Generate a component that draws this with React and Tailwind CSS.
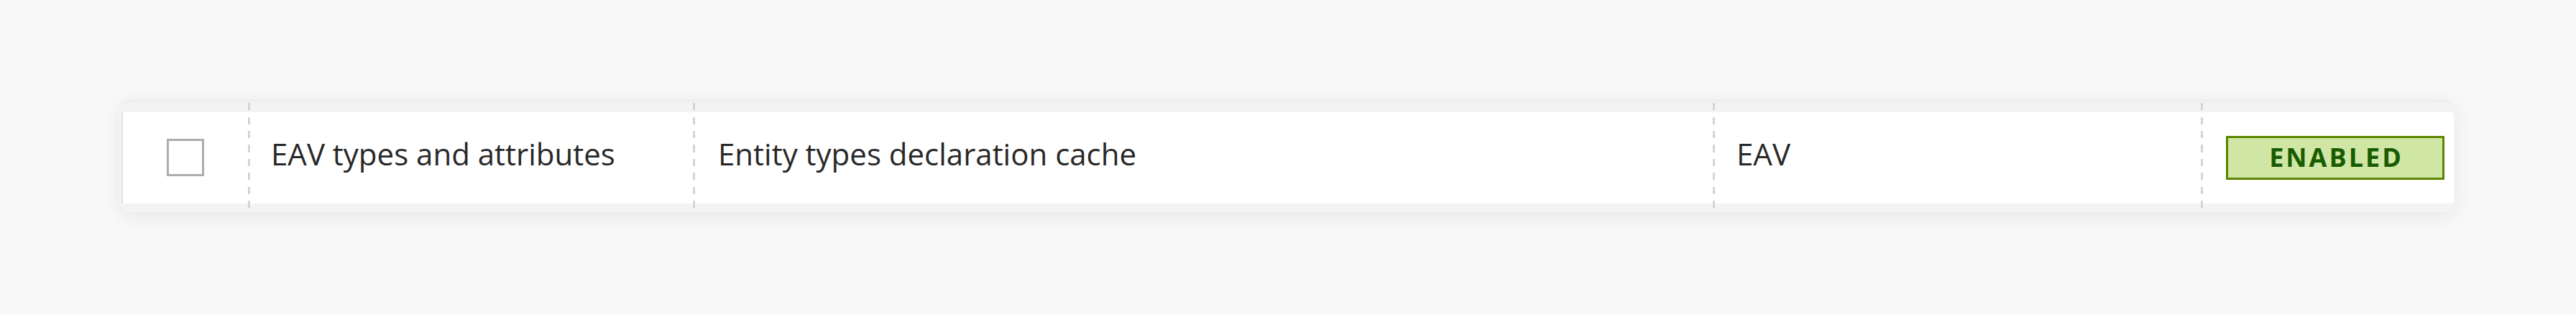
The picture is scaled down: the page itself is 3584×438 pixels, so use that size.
export default function App() {
  const font = { fontFamily: '"Open Sans", "Noto Sans", sans-serif' };
  const dash =
    "bg-[repeating-linear-gradient(to_bottom,#d4d4d4_0px,#d4d4d4_10px,transparent_10px,transparent_19.5px)] bg-[length:3px_100%] bg-no-repeat bg-left";
  return (
    <div className="min-h-[438px] w-[3584px] bg-[#f8f8f8] pt-[138px] pl-[165px]" style={font}>
      <div className="w-[3252px] h-[157px] rounded-[18px] bg-[#f3f3f3] border-t-[4px] border-[#efefef] shadow-[0_6px_24px_rgba(0,0,0,0.07)] pt-[1px] pl-[6px] pr-[3px]">
        <div className="grid grid-cols-[174px_619px_1419px_679px_352px] grid-rows-[152px] h-[152px]">
          <div className="row-start-1 col-start-1 col-end-6 mt-[13px] mb-[12px] bg-white rounded-r-[4px] shadow-[-2px_0_0_#e2e2e2]" />
          <div className="row-start-1 col-start-1 flex items-center justify-center">
            <div className="w-[52px] h-[52px] border-[3px] border-[#adadad] bg-white" />
          </div>
          <div className={`row-start-1 col-start-2 flex items-center ${dash} pl-[32px] pb-[12px]`}>
            <span className="text-[42px] leading-[57px] text-[#282828] whitespace-nowrap">EAV types and attributes</span>
          </div>
          <div className={`row-start-1 col-start-3 flex items-center ${dash} pl-[35px] pb-[12px]`}>
            <span className="text-[42px] leading-[57px] text-[#282828] whitespace-nowrap">Entity types declaration cache</span>
          </div>
          <div className={`row-start-1 col-start-4 flex items-center ${dash} pl-[33px] pb-[12px]`}>
            <span className="text-[42px] leading-[57px] text-[#282828] whitespace-nowrap">EAV</span>
          </div>
          <div className={`row-start-1 col-start-5 flex items-center ${dash} pl-[35px]`}>
            <div className="w-[304px] h-[61px] border-[3px] border-[#5b8500] bg-[#d0e6a5] flex items-center justify-center">
              <span className="text-[36px] font-bold uppercase tracking-[3px] text-[#185b00] leading-none pl-[3px]">Enabled</span>
            </div>
          </div>
        </div>
      </div>
    </div>
  );
}
